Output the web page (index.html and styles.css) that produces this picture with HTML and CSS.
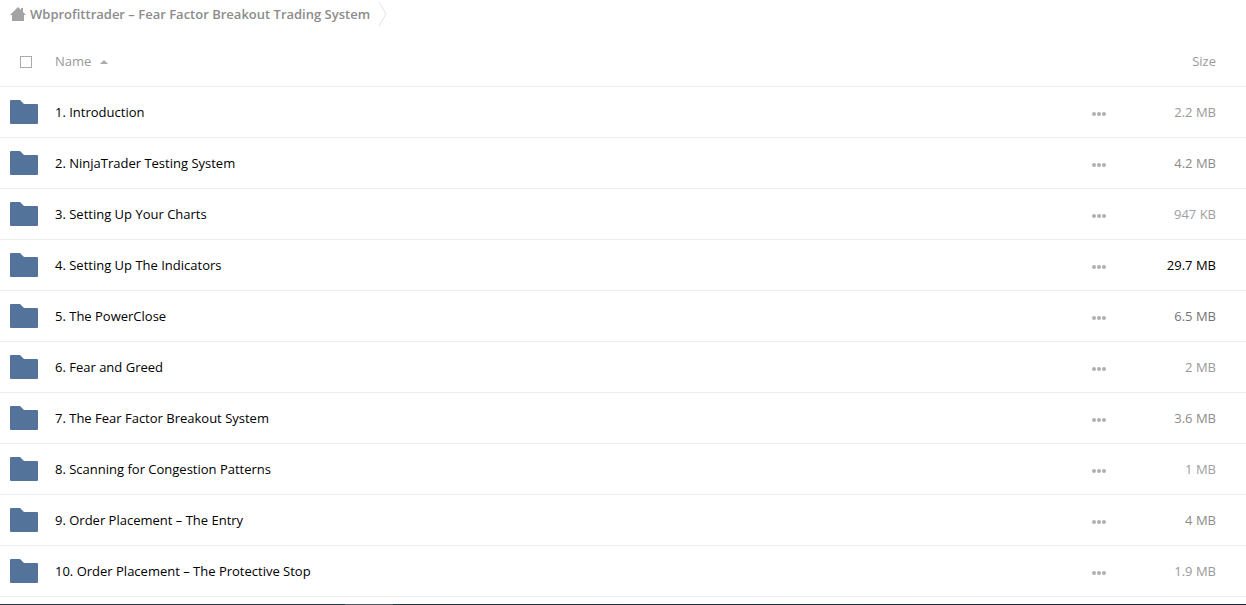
FILE: index.html
```
<!DOCTYPE html>
<html lang="en">
<head>
<meta charset="utf-8">
<title>Files</title>
<link rel="stylesheet" href="styles.css">
</head>
<body>
<svg class="sprite" aria-hidden="true">
  <symbol id="folder" viewBox="0 0 28 24"><path d="M0 1Q0 0 1 0H10L14 4H27Q28 4 28 5V23Q28 24 27 24H1Q0 24 0 23Z"/></symbol>
  <symbol id="dots" viewBox="0 0 14 4"><circle cx="2" cy="2" r="2"/><circle cx="7" cy="2" r="2"/><circle cx="12" cy="2" r="2"/></symbol>
</svg>
<nav class="breadcrumb" aria-label="Breadcrumb">
  <a class="crumb" href="#">
    <svg class="home" viewBox="0 0 16 14" aria-hidden="true"><path d="M8 0L11 3V1H13V5L16 8H14V14H2V8H0Z"/></svg>
    <span>Wbprofittrader – Fear Factor Breakout Trading System</span>
  </a>
  <svg class="chevron" viewBox="0 0 9 26" aria-hidden="true"><path d="M1 1L8 13L1 25"/></svg>
</nav>
<table class="files">
  <thead>
    <tr>
      <th class="icon-col"><input class="select-all" type="checkbox" aria-label="Select all"></th>
      <th class="name"><button class="sort" type="button">Name <svg class="arrow" viewBox="0 0 8 4" aria-hidden="true"><path d="M0 4L4 0L8 4Z"/></svg></button></th>
      <th class="actions"></th>
      <th class="size"><button class="sort" type="button">Size</button></th>
    </tr>
  </thead>
  <tbody>
    <tr><td class="icon-col"><svg class="folder"><use href="#folder"/></svg></td><td class="name"><a href="#">1. Introduction</a></td><td class="actions"><button class="more" type="button" aria-label="Actions"><svg class="dots"><use href="#dots"/></svg></button></td><td class="size">2.2 MB</td></tr>
    <tr><td class="icon-col"><svg class="folder"><use href="#folder"/></svg></td><td class="name"><a href="#">2. NinjaTrader Testing System</a></td><td class="actions"><button class="more" type="button" aria-label="Actions"><svg class="dots"><use href="#dots"/></svg></button></td><td class="size medium">4.2 MB</td></tr>
    <tr><td class="icon-col"><svg class="folder"><use href="#folder"/></svg></td><td class="name"><a href="#">3. Setting Up Your Charts</a></td><td class="actions"><button class="more" type="button" aria-label="Actions"><svg class="dots"><use href="#dots"/></svg></button></td><td class="size small">947 KB</td></tr>
    <tr><td class="icon-col"><svg class="folder"><use href="#folder"/></svg></td><td class="name"><a href="#">4. Setting Up The Indicators</a></td><td class="actions"><button class="more" type="button" aria-label="Actions"><svg class="dots"><use href="#dots"/></svg></button></td><td class="size huge">29.7 MB</td></tr>
    <tr><td class="icon-col"><svg class="folder"><use href="#folder"/></svg></td><td class="name"><a href="#">5. The PowerClose</a></td><td class="actions"><button class="more" type="button" aria-label="Actions"><svg class="dots"><use href="#dots"/></svg></button></td><td class="size large">6.5 MB</td></tr>
    <tr><td class="icon-col"><svg class="folder"><use href="#folder"/></svg></td><td class="name"><a href="#">6. Fear and Greed</a></td><td class="actions"><button class="more" type="button" aria-label="Actions"><svg class="dots"><use href="#dots"/></svg></button></td><td class="size">2 MB</td></tr>
    <tr><td class="icon-col"><svg class="folder"><use href="#folder"/></svg></td><td class="name"><a href="#">7. The Fear Factor Breakout System</a></td><td class="actions"><button class="more" type="button" aria-label="Actions"><svg class="dots"><use href="#dots"/></svg></button></td><td class="size medium">3.6 MB</td></tr>
    <tr><td class="icon-col"><svg class="folder"><use href="#folder"/></svg></td><td class="name"><a href="#">8. Scanning for Congestion Patterns</a></td><td class="actions"><button class="more" type="button" aria-label="Actions"><svg class="dots"><use href="#dots"/></svg></button></td><td class="size small">1 MB</td></tr>
    <tr><td class="icon-col"><svg class="folder"><use href="#folder"/></svg></td><td class="name"><a href="#">9. Order Placement – The Entry</a></td><td class="actions"><button class="more" type="button" aria-label="Actions"><svg class="dots"><use href="#dots"/></svg></button></td><td class="size medium">4 MB</td></tr>
    <tr><td class="icon-col"><svg class="folder"><use href="#folder"/></svg></td><td class="name"><a href="#">10. Order Placement – The Protective Stop</a></td><td class="actions"><button class="more" type="button" aria-label="Actions"><svg class="dots"><use href="#dots"/></svg></button></td><td class="size">1.9 MB</td></tr>
  </tbody>
</table>
<div class="edge"></div>
</body>
</html>
```
FILE: styles.css
```
* {
  box-sizing: border-box;
}

body {
  margin: 0;
  background: #fff;
  color: #000;
  font-family: "Open Sans", sans-serif;
  font-size: 13px;
  line-height: 20px;
}

a {
  color: inherit;
  text-decoration: none;
}

button {
  padding: 0;
  border: 0;
  background: none;
  color: inherit;
  font: inherit;
  cursor: pointer;
}

svg {
  display: block;
}

.sprite {
  display: none;
}

.breadcrumb {
  display: flex;
  align-items: center;
  gap: 8px;
  height: 36px;
  padding: 0 10px 8px;
}

.crumb {
  display: flex;
  align-items: center;
  gap: 4px;
  color: #8c8c8c;
  font-weight: 600;
}

.home {
  width: 16px;
  height: 14px;
  fill: #a3a3a3;
}

.chevron {
  width: 9px;
  height: 26px;
  fill: none;
  stroke: #e4e4e4;
}

.files {
  width: 100%;
  border-collapse: separate;
  border-spacing: 0;
  table-layout: fixed;
}

.files th,
.files td {
  height: 51px;
  padding: 0;
  border-bottom: 1px solid #ededed;
  font-weight: 400;
  text-align: left;
  vertical-align: middle;
}

.files th {
  color: #999;
}

.files .icon-col {
  width: 55px;
  padding-left: 10px;
}

.files .actions {
  width: 44px;
}

.files .size {
  width: 110px;
  padding-right: 30px;
  color: #999;
  text-align: right;
}

.files .small {
  color: #a0a0a0;
}

.files .medium {
  color: #8c8c8c;
}

.files .large {
  color: #747474;
}

.files .huge {
  color: #000;
}

.select-all {
  display: block;
  width: 12px;
  height: 12px;
  margin: 2px 0 0 10px;
  appearance: none;
  border: 1px solid #aaa;
  background: #fff;
}

.sort {
  display: inline-flex;
  align-items: center;
  gap: 9px;
}

.arrow {
  width: 8px;
  height: 4px;
  margin-top: 2px;
  fill: #aaa;
}

.folder {
  width: 28px;
  height: 24px;
  fill: #54739a;
}

.more {
  display: block;
  padding: 10px 0 6px;
}

.dots {
  width: 14px;
  height: 4px;
  fill: #b0b0b0;
}

.edge {
  height: 1px;
  margin-top: 7px;
  background: linear-gradient(90deg, #203640 345px, #505c66 345px, #505c66 393px, #203640 393px, #1c2444);
}
```
